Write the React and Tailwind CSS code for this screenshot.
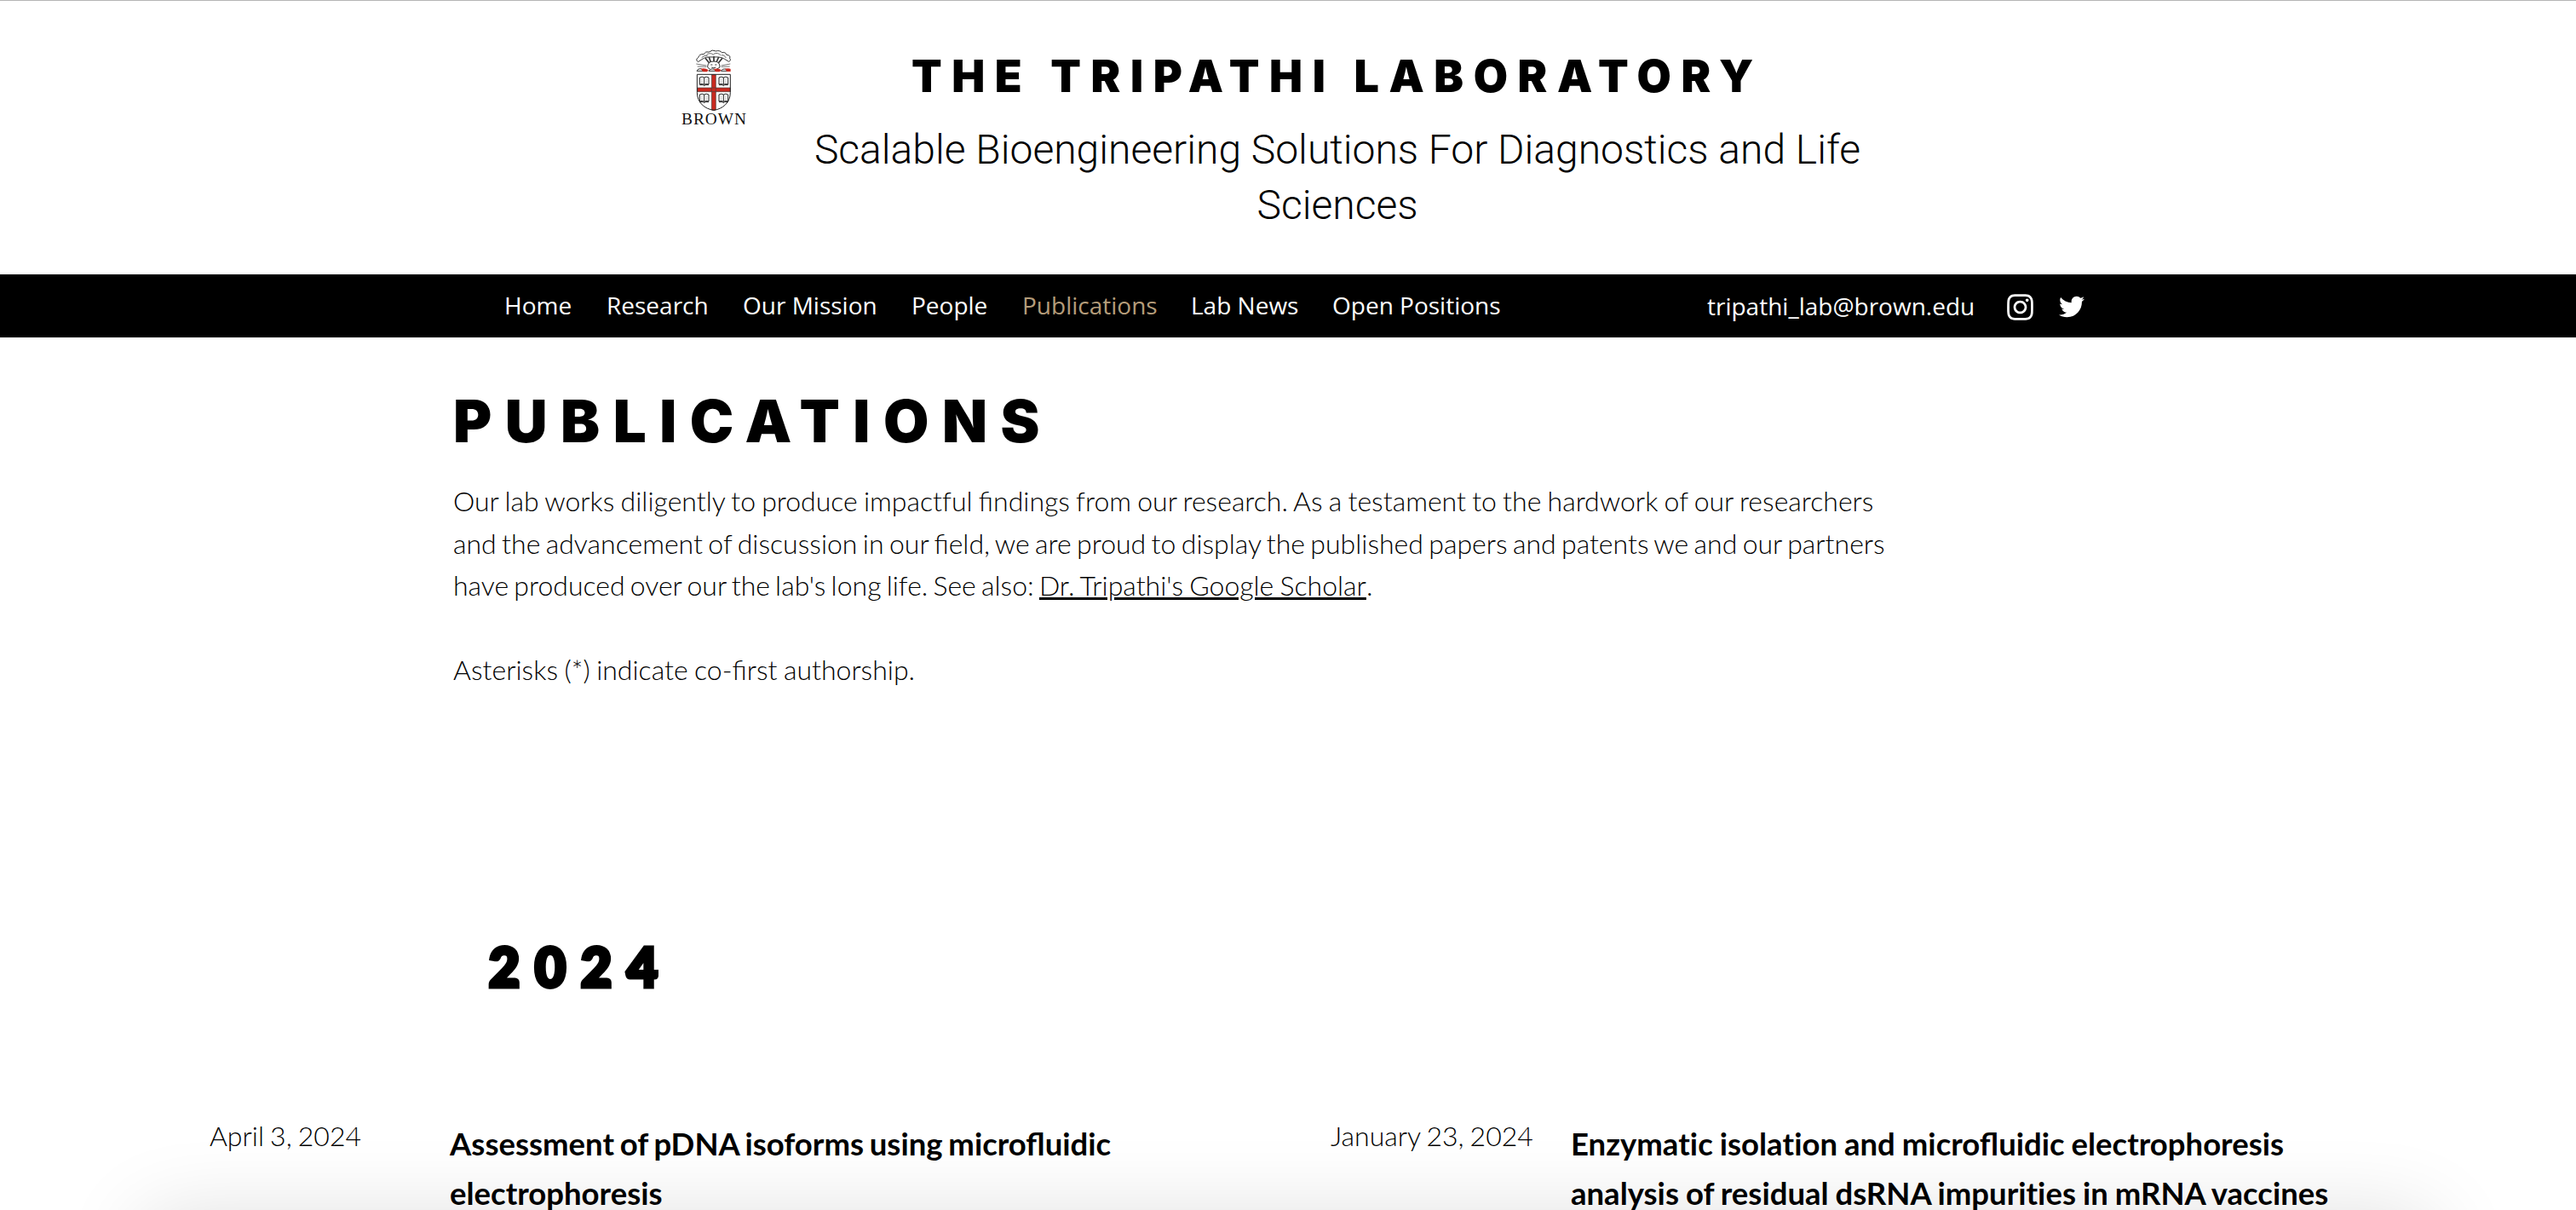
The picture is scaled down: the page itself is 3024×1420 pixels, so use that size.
import { FaInstagram, FaTwitter } from "react-icons/fa";

const navItems = [
  { label: "Home", width: "w-[120px]" },
  { label: "Research", width: "w-[160px]" },
  { label: "Our Mission", width: "w-[198px]" },
  { label: "People", width: "w-[130px]" },
  { label: "Publications", width: "w-[198px]", active: true },
  { label: "Lab News", width: "w-[166px]" },
  { label: "Open Positions", width: "w-[200px]" },
];

// Keeps "fi"/"fl" ligatures but sets the "t" pairs as separate letters.
function Plain({ children }) {
  return children.split(/(ti|tf|tt)/).map((part, i) =>
    i % 2 ? <span key={i} className="[font-variant-ligatures:none]">{part}</span> : part
  );
}

function Book({ x, y }) {
  return (
    <g transform={`translate(${x} ${y})`} fill="#fff" stroke="#222" strokeWidth="3">
      <path d="M0 3Q9-2 16 3Q23-2 32 3V27Q23 23 16 28Q9 23 0 27Z" />
      <path d="M16 3V29M0 29H12L16 32L20 29H32" />
      <path d="M5 9H11M5 15H11M5 20H11M21 9H27M21 15H27M21 20H27" strokeWidth="1.5" stroke="#888" />
    </g>
  );
}

function BrownLogo() {
  return (
    <svg viewBox="0 0 240 288" className="h-[96px] w-[80px] shrink-0" role="img" aria-label="Brown">
      <g fill="#fff" stroke="#333" strokeWidth="3">
        <path d="M64 47Q54 38 65 32Q69 18 84 20Q91 8 103 12Q115 2 127 9Q141 5 148 14Q161 11 165 22Q180 24 176 34Q183 42 173 46L158 37Q145 28 118 30Q91 28 78 38Z" />
        <path d="M77 32Q86 22 98 26M94 22Q107 12 119 22M119 19Q134 12 145 24M147 23Q157 21 163 33" fill="none" stroke="#666" />
        <path d="M58 54L94 60M62 63L94 64M178 54L146 60M176 63L146 64" stroke="#777" />
        <path d="M90 34L104 51M103 30L109 48M120 27V46M137 30L129 48M150 34L135 52" strokeWidth="5" />
        <path d="M98 66Q97 45 120 45Q142 45 141 66Q131 76 110 76Z" />
        <path d="M109 57H115M124 57H130M112 66Q120 71 127 66" fill="none" />
      </g>
      <path d="M60 79Q63 69 76 71L84 79Z M102 79Q108 69 122 73L133 79Z M145 79Q150 69 166 73L174 79Z" fill="#fff" stroke="#333" strokeWidth="3" />
      <path d="M74 71Q90 67 101 76L96 82H82Z M119 72Q138 67 146 76L140 82H127Z M159 71Q174 68 179 72V81H166Z" fill="#c9291f" />
      <path d="M61 91H178V155C178 190 151 213 120 217C88 213 61 190 61 155Z" fill="#fff" />
      <path d="M112 92H127V216Q119 219 112 216Z M62 138H178V152H62Z" fill="#c9291f" stroke="#444" strokeWidth="2" />
      <path d="M61 91H178V155C178 190 151 213 120 217C88 213 61 190 61 155Z" fill="none" stroke="#222" strokeWidth="3" />
      <Book x={70} y={99} />
      <Book x={138} y={99} />
      <Book x={70} y={159} />
      <Book x={138} y={159} />
      <text x="6" y="267" textLength="228" lengthAdjust="spacing" fontSize="58" fill="#111" fontFamily="Liberation Serif, serif">
        BROWN
      </text>
    </svg>
  );
}

function Publication({ date, dateWidth, titleSpacing, lines }) {
  return (
    <article className="flex items-start">
      <time className={`${dateWidth} shrink-0 whitespace-nowrap text-[32px] leading-[50px] font-light [word-spacing:-1.6px]`}>{date}</time>
      <h3 className={`mt-[5px] whitespace-nowrap text-[36.5px] leading-[58px] font-bold ${titleSpacing}`}>
        {lines.map((line) => (
          <span key={line} className="block"><Plain>{line}</Plain></span>
        ))}
      </h3>
    </article>
  );
}

export default function App() {
  return (
    <div className="relative flex h-[1420px] w-full flex-col overflow-hidden bg-white font-['Lato',sans-serif] text-black">
      <header className="flex h-[322px] shrink-0 items-start border-t border-[#b5b5b5] pl-[798px]">
        <div className="mt-[56px]">
          <BrownLogo />
        </div>
        <div className="ml-[72px] flex w-[1240px] flex-col items-center whitespace-nowrap">
          <h1 className="mt-[57px] h-[64px] font-['Inter',sans-serif] text-[52px] leading-[64px] font-black tracking-[11.6px]">THE TRIPATHI LABORATORY</h1>
          <p className="mt-[21px] text-center font-['Roboto',sans-serif] text-[48px] leading-[65px] font-light">
            Scalable Bioengineering Solutions For Diagnostics and Life
            <br />
            Sciences
          </p>
        </div>
      </header>

      <div className="flex h-[74px] shrink-0 items-center bg-black pb-[2px] pl-[592px] font-['Open_Sans',sans-serif] text-[28px] text-white">
        <nav className="flex w-[1412px] whitespace-nowrap">
          {navItems.map((item) => (
            <a key={item.label} className={`${item.width} ${item.active ? "text-[#b49c7a]" : ""}`}>{item.label}</a>
          ))}
        </nav>
        <a className="w-[350px] pt-[2px] whitespace-nowrap">tripathi_lab@brown.edu</a>
        <div className="flex items-center gap-[28px] pt-[4px]">
          <FaInstagram className="size-[35px]" />
          <FaTwitter className="size-[30px]" />
        </div>
      </div>

      <main className="flex flex-col whitespace-nowrap">
        <section className="pl-[532px]">
          <h2 className="mt-[56px] font-['Inter',sans-serif] text-[69px] leading-[84px] font-black tracking-[15.5px]">PUBLICATIONS</h2>
          <p className="mt-[27px] text-[32px] leading-[49.6px] font-light">
            <span className="[word-spacing:-1.5px]"><Plain>Our lab works diligently to produce impactful findings from our research. As a testament to the hardwork of our researchers</Plain></span>
            <br />
            <span className="[word-spacing:-2.3px]">and the advancement of discussion in our field, we are proud to display the published papers and patents we and our partners</span>
            <br />
            <span className="[word-spacing:-2.5px]">have produced over our the lab's long life. See also: </span>
            <a className="underline decoration-[3px] [word-spacing:-1.5px]">Dr. Tripathi's Google Scholar</a>.
            <br />
            <br />
            <span className="[word-spacing:-1.2px]">Asterisks (*) indicate co-first authorship.</span>
          </p>
        </section>
        <h2 className="mt-[281px] pl-[574px] text-[62px] leading-[84px] font-black tracking-[18px] [-webkit-text-stroke:5px_#000]">2024</h2>
        <section className="mt-[132px] flex pl-[246px]">
          <div className="w-[1316px] shrink-0">
            <Publication
              date="April 3, 2024"
              dateWidth="w-[282px]"
              titleSpacing="[word-spacing:-2.1px]"
              lines={["Assessment of pDNA isoforms using microfluidic", "electrophoresis"]}
            />
          </div>
          <Publication
            date="January 23, 2024"
            dateWidth="w-[282px]"
            titleSpacing="[word-spacing:-0.9px]"
            lines={["Enzymatic isolation and microfluidic electrophoresis", "analysis of residual dsRNA impurities in mRNA vaccines"]}
          />
        </section>
      </main>

      <div className="pointer-events-none absolute inset-x-[170px] top-[1430px] h-[200px] shadow-[0_0_100px_rgba(0,0,0,0.14)]" />
    </div>
  );
}
